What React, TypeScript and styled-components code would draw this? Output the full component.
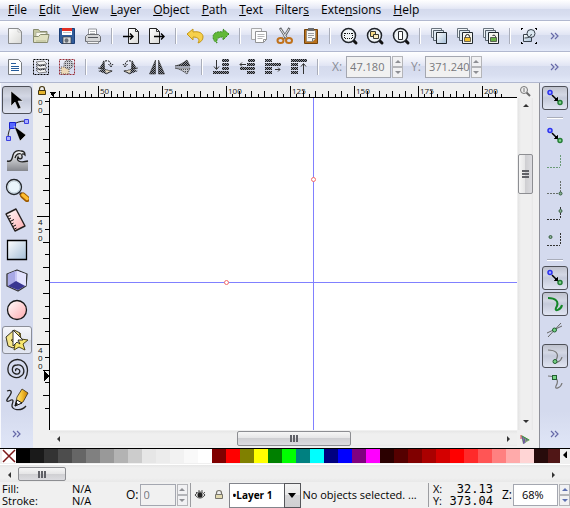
import React from "react";
import styled, { createGlobalStyle, css } from "styled-components";

const GlobalStyle = createGlobalStyle`
  *, *::before, *::after { box-sizing: border-box; }
  body {
    margin: 0;
    background: #f0f0f0;
    color: #000;
    font: 11px/16px "Open Sans", "Noto Sans", sans-serif;
  }
  button, input, select { font: inherit; color: inherit; margin: 0; border-radius: 0; }
  svg { display: block; flex: none; }
`;

/* ---------- shell ---------- */

const Shell = styled.div`
  display: flex;
  flex-direction: column;
  min-height: 100vh;
  overflow: hidden;
`;

const barSurface = css`
  background: linear-gradient(#ffffff 0%, #eef0f9 28%, #e1e5f4 45%, #d4daed 46%, #d8def0 75%, #e2e8f8 100%);
  border-bottom: 1px solid #b1b8cf;
`;

const MenuBar = styled.nav`
  ${barSurface}
  display: flex;
  height: 21px;
  padding-left: 2px;
`;

const MenuItem = styled.button`
  border: 0;
  padding: 0 6px;
  background: none;
  font-size: 12px;
  line-height: 20px;
  white-space: nowrap;
  &:hover { background: #c9d3ee; }
`;

const ToolRow = styled.div`
  ${barSurface}
  display: flex;
  align-items: center;
  height: 31px;
  padding-left: 2px;
`;

const IconButton = styled.button`
  display: grid;
  place-items: center;
  flex: none;
  width: 26px;
  height: 26px;
  padding: 0;
  border: 0;
  background: none;
`;

const Divider = styled.span`
  flex: none;
  width: 2px;
  height: 16px;
  margin: 0 5px;
  background: linear-gradient(90deg, #a9adba 50%, #ffffff 50%);
`;

const More = styled.button<{ $column?: boolean }>`
  display: grid;
  place-items: center;
  width: 26px;
  height: 20px;
  padding: 0;
  border: 0;
  background: none;
  margin: ${(p) => (p.$column ? "auto 0 4px" : "0 2px 0 auto")};
`;

/* ---------- fields ---------- */

const FieldLabel = styled.label<{ $muted?: boolean }>`
  padding-left: ${(p) => (p.$muted ? "8px" : "0")};
  color: ${(p) => (p.$muted ? "#8a8d97" : "#000")};
  font-size: 12px;
  white-space: nowrap;
`;

const Spin = styled.span<{ $gap?: number }>`
  display: flex;
  align-items: stretch;
  height: 22px;
  gap: 1px;
  margin-left: ${(p) => p.$gap ?? 4}px;
`;

const SpinInput = styled.input<{ $width: number; $active?: boolean }>`
  width: ${(p) => p.$width}px;
  padding: 0 0 0 ${(p) => (p.$active ? 8 : 3)}px;
  border: 1px solid #a4a7b0;
  background: ${(p) => (p.$active ? "#fff" : "#f1f1f1")};
  color: ${(p) => (p.$active ? "#000" : "#77787c")};
`;

const SpinButtons = styled.span`
  display: grid;
  grid-template-rows: 1fr 1fr;
  width: 11px;
`;

const StepButton = styled.button`
  display: grid;
  place-items: center;
  padding: 0;
  border: 1px solid #b4b5b9;
  background: #f1f1f3;
`;

/* ---------- middle ---------- */

const Main = styled.main`
  display: grid;
  grid-template-columns: 33px 1fr 31px;
  flex: 1;
`;

const SideBar = styled.aside<{ $snap?: boolean }>`
  display: flex;
  flex-direction: column;
  align-items: center;
  padding-top: 3px;
  border-left: 1px solid ${(p) => (p.$snap ? "#8f919a" : "#f8f9fd")};
  background: linear-gradient(#e9ecf7, #d4daee 10px, #d4daee 90%, #e0e6f7);
`;

const ToolButton = styled.button<{ $state?: "on" | "hover" }>`
  display: grid;
  place-items: center;
  width: 30px;
  height: 28px;
  margin-bottom: 2px;
  padding: 0;
  border: 1px solid transparent;
  border-radius: 3px;
  background: none;
  ${(p) => p.$state === "on" && css`
    border-color: #4e5058;
    background: linear-gradient(#bfc2cd, #d3d7e4 35%, #c5cada 50%, #e0e4f1);
  `}
  ${(p) => p.$state === "hover" && css`
    border-color: #8b8e98;
    background: linear-gradient(#f5f6fa, #e6e9f1 48%, #d1d6e3 50%, #e4e8f3);
  `}
`;

const SnapButton = styled(ToolButton)`
  width: 26px;
  height: 24px;
`;

const SideRule = styled.span`
  width: 16px;
  height: 2px;
  margin: 5px 0;
  background: linear-gradient(#a9adba 50%, #ffffff 50%);
`;

const Workspace = styled.section`
  display: grid;
  grid-template-columns: 17px 1fr 16px 6px;
  grid-template-rows: 15px 1fr 18px;
  min-width: 0;
  background: #f0f0f0;
`;

const Corner = styled.div<{ $area: string }>`
  display: grid;
  place-items: center;
  grid-area: ${(p) => p.$area};
`;

const Drawing = styled.svg`
  position: absolute;
  inset: 0;
  width: 100%;
  height: 100%;
  overflow: hidden;
`;

const Slot = styled.div<{ $area: string }>`
  position: relative;
  min-width: 0;
  overflow: hidden;
  grid-area: ${(p) => p.$area};
`;

const Paper = styled(Slot)`
  background: #fff;
`;

/* ---------- scrollbars ---------- */

const Track = styled.div<{ $vertical?: boolean }>`
  display: flex;
  flex-direction: ${(p) => (p.$vertical ? "column" : "row")};
  background: ${(p) => (p.$vertical
    ? "linear-gradient(90deg, #e4e4e4, #efefef 3px, #efefef 13px, #e6e6e6)"
    : "linear-gradient(#e6e6e6, #efefef 3px, #efefef 13px, #e8e8e8)")};
`;

const SideTrack = styled(Track)`
  grid-area: 2 / 3;
  margin-left: 1px;
`;

const BottomTrack = styled(Track)`
  grid-area: 3 / 2;
  margin: 1px 0 2px;
`;

const ScrollArrow = styled.button`
  display: grid;
  place-items: center;
  flex: none;
  width: 16px;
  height: 16px;
  padding: 0;
  border: 0;
  background: none;
`;

const Travel = styled.div<{ $share: number }>`
  flex: ${(p) => p.$share};
`;

const Thumb = styled.div<{ $vertical?: boolean; $share: number }>`
  display: flex;
  flex-direction: ${(p) => (p.$vertical ? "column" : "row")};
  align-items: center;
  justify-content: center;
  gap: 1px;
  flex: ${(p) => p.$share};
  border: 1px solid #8d8e92;
  border-radius: 2px;
  background: linear-gradient(${(p) => (p.$vertical ? "90deg" : "180deg")}, #f6f6f6, #e5e5e6 48%, #cfcfd2 50%, #dcdce0);
`;

const Grip = styled.i<{ $vertical?: boolean }>`
  ${(p) => (p.$vertical ? "width: 7px; height: 2px;" : "width: 2px; height: 7px;")}
  background: #606167;
`;

const MiniTrack = styled(Track)`
  height: 18px;
  padding: 2px 8px 1px 1px;
  border-top: 1px solid #fff;
`;

/* ---------- palette ---------- */

const Palette = styled.div`
  display: flex;
  height: 16px;
  padding: 0 0 1px 2px;
  border-top: 1px solid #000;
`;

const SwatchStrip = styled.div`
  display: flex;
  flex: 1;
  min-width: 0;
  overflow: hidden;
`;

const Swatch = styled.button<{ $color: string }>`
  flex: none;
  width: 14px;
  height: 14px;
  padding: 0;
  border: 0;
  background: ${(p) => p.$color};
`;

const PaletteMenu = styled.button`
  width: 10px;
  height: 10px;
  padding: 1px;
  border: 0;
  background: none;
`;

/* ---------- status ---------- */

const StatusBar = styled.footer`
  display: flex;
  align-items: center;
  height: 26px;
  padding-left: 2px;
  white-space: nowrap;
`;

const PaintGrid = styled.dl`
  display: grid;
  grid-template-columns: 70px 54px;
  grid-auto-rows: 12px;
  flex: none;
  margin: 0;
  line-height: 12px;
  dt, dd { margin: 0; }
`;

const SmallButton = styled.button`
  display: grid;
  place-items: center;
  flex: none;
  width: 19px;
  height: 22px;
  padding: 0;
  border: 0;
  background: none;
`;

const StatusRule = styled.span`
  flex: none;
  width: 1px;
  height: 24px;
  margin-left: 2px;
  background: #9c9da1;
`;

const LayerPicker = styled.span`
  display: grid;
  grid-template-columns: 1fr 17px;
  flex: none;
  width: 72px;
  height: 25px;
  > * { grid-row: 1; }
`;

const LayerSelect = styled.select`
  grid-column: 1 / -1;
  appearance: none;
  padding: 0 0 0 3px;
  border: 1px solid #83858c;
  background: #fff;
  font-size: 10px;
  font-weight: 700;
`;

const LayerArrow = styled.span`
  grid-column: 2;
  display: grid;
  place-items: center;
  border: 1px solid #55565a;
  background: linear-gradient(#f3f3f3, #e8e8e8 48%, #d5d5d7 50%, #cfcfd1);
  pointer-events: none;
`;

const Message = styled.output`
  flex: 1;
  min-width: 0;
  padding-left: 2px;
  overflow: hidden;
`;

const Coords = styled(PaintGrid)`
  grid-template-columns: 12px 48px;
  padding-left: 4px;
  dd { font: 12px/12px "DejaVu Sans Mono", monospace; text-align: right; }
`;

const ZoomLabel = styled(FieldLabel)`
  padding-left: 9px;
`;

/* ---------- icon drawings ---------- */

type IconProps = { size?: number; children: React.ReactNode };

const Icon = ({ size = 20, children }: IconProps) => (
  <svg width={size} height={size} viewBox={`0 0 ${size} ${size}`} fill="none" aria-hidden="true">{children}</svg>
);

const Defs = () => (
  <svg width="0" height="0" aria-hidden="true">
    <defs>
      <pattern id="dither" width="2" height="2" patternUnits="userSpaceOnUse">
        <path d="M0 0h1v1H0zM1 1h1v1H1z" fill="#17181c" />
        <path d="M1 0h1v1H1zM0 1h1v1H0z" fill="#8d9099" />
      </pattern>
      <pattern id="ditherLight" width="2" height="2" patternUnits="userSpaceOnUse">
        <path d="M0 0h2v2H0z" fill="#c8cad0" />
        <path d="M0 0h1v1H0z" fill="#4b4d55" />
      </pattern>
      <linearGradient id="page" x1="0" y1="0" x2="1" y2="1"><stop stopColor="#fff" /><stop offset="1" stopColor="#d9d9d6" /></linearGradient>
      <linearGradient id="sky" x1="0" y1="0" x2="1" y2="1"><stop stopColor="#fff" /><stop offset="1" stopColor="#a3bdd6" /></linearGradient>
      <linearGradient id="rose" x1="0" y1="0" x2="1" y2="1"><stop stopColor="#fff" /><stop offset="1" stopColor="#ffa9ad" /></linearGradient>
      <linearGradient id="gold" x1="0" y1="0" x2="1" y2="0"><stop stopColor="#fff3a0" /><stop offset=".5" stopColor="#f6c437" /><stop offset="1" stopColor="#c77e00" /></linearGradient>
      <linearGradient id="steel" x1="0" y1="0" x2="0" y2="1"><stop stopColor="#f7f8fa" /><stop offset="1" stopColor="#85878d" /></linearGradient>
    </defs>
  </svg>
);

const sheet = "M3.5 2.5h10l3 3v12h-13z";

const Glass = ({ children }: { children?: React.ReactNode }) => (
  <Icon>
    <path d="M14 14l3 3" stroke="#111" strokeWidth="3" strokeLinecap="round" />
    <circle cx="9.5" cy="9.5" r="7" fill="#eef3f6" stroke="#20242a" strokeWidth="1.5" />
    {children}
  </Icon>
);

const Layers = ({ lock }: { lock?: "gold" | "green" }) => (
  <Icon>
    <path d="M2.5 2.5h10v9h-10z" fill="#eef3f7" stroke="#6a747e" />
    <path d="M4.5 4.5h10v10h-10z" fill="#dfe9f1" stroke="#55606b" />
    <path d="M7.5 6.5h10v11h-10z" fill={lock ? "#f5f5ef" : "url(#sky)"} stroke="#1f262c" />
    {lock && (
      <>
        <path d={lock === "gold" ? "M10.5 12v-1.5a2 2 0 0 1 4 0V12" : "M11.500 9.500a2 2 0 0 1 3 1v1"} stroke="#222" />
        <path d="M9.5 11.5h6v4h-6z" fill={lock === "gold" ? "#f3c02c" : "#67b045"} stroke="#333" strokeWidth=".7" />
      </>
    )}
  </Icon>
);

const fileIcons: Record<string, React.ReactNode> = {
  New: <Icon><path d={sheet} fill="url(#page)" stroke="#8a8c8e" /><path d="M13 3l3 3h-3z" fill="#fff" stroke="#b0b0b0" strokeWidth=".6" /></Icon>,
  Open: (
    <Icon>
      <path d="M2.5 15.5v-12h5l1.5 2h7v3" fill="#c5c8a3" stroke="#878b6e" />
      <path d="M5 6.5h10v5H5z" fill="#f8f8ef" stroke="#a9ab93" strokeWidth=".7" />
      <path d="M2.5 10.5h5l2-2h8.5l-1.5 8h-14z" fill="#dfe0c0" stroke="#878b6e" />
      <path d="M5 15h10" stroke="#b8bb95" />
    </Icon>
  ),
  Save: (
    <Icon>
      <path d="M2.5 2.5h15v15h-13l-2-2z" fill="#315c9c" stroke="#1c3e76" />
      <path d="M5 3h10v6H5z" fill="#fff" /><path d="M5 2h10v3H5z" fill="#e22f24" /><path d="M6 6.5h8" stroke="#b9c4cf" />
      <path d="M6 11h8v6.5H6z" fill="#dadbdd" stroke="#36393e" strokeWidth=".7" /><ellipse cx="9.5" cy="14.5" rx="2" ry="2.2" fill="#6b7178" />
    </Icon>
  ),
  Print: (
    <Icon>
      <path d="M5.5 10v-7h8v7" fill="#fff" stroke="#92949a" /><path d="M7 5.5h5M7 7.5h5" stroke="#b8babd" />
      <path d="M2.5 10.5l2-2h11l2 2v5h-15z" fill="#d4d5d7" stroke="#6b6d72" />
      <path d="M5 11.5h10" stroke="#4f5258" /><path d="M4.5 15.5h11v2h-11z" fill="#f2f2f2" stroke="#898b8f" />
    </Icon>
  ),
  Import: (
    <Icon>
      <path d="M7.5 2.5h7l3 3v12h-10z" fill="url(#page)" stroke="#222" /><path d="M14.5 2.5v3h3" stroke="#333" />
      <path d="M2 10.5h10M9 7.5l3 3-3 3" stroke="#000" strokeWidth="1.4" />
    </Icon>
  ),
  Export: (
    <Icon>
      <path d="M2.5 2.5h7l3 3v12h-10z" fill="url(#page)" stroke="#222" /><path d="M9.5 2.5v3h3" stroke="#333" />
      <path d="M7 10.5h10M14 7.5l3 3-3 3" stroke="#000" strokeWidth="1.4" />
    </Icon>
  ),
  Undo: <Icon><path d="M2 8l6-5v3c6-1 10 1 10 5 0 3-2 5-5 6 2-3 1-6-5-6v3z" fill="#f6d04b" stroke="#c49716" strokeLinejoin="round" /></Icon>,
  Redo: <Icon><path d="M18 8l-6-5v3C6 5 2 7 2 11c0 3 2 5 4 6-1-4 1-6 6-6v3z" fill="#61b837" stroke="#3d8926" strokeDasharray="2 1" strokeLinejoin="round" /></Icon>,
  Copy: (
    <Icon>
      <path d="M2.5 2.5h10v11h-10z" fill="#f7f7f7" stroke="#a7a8aa" />
      <path d="M6.5 5.5h11v8l-3 3h-8z" fill="#fff" stroke="#929395" /><path d="M8.5 8.5h7M8.5 10.5h7M8.5 12.5h5" stroke="#b5b6b8" /><path d="M14.5 16.5v-3h3" stroke="#929395" />
    </Icon>
  ),
  Cut: (
    <Icon>
      <path d="M5 2l7 11M14.5 2L8 13" stroke="#66696d" strokeWidth="2.5" /><path d="M5.5 3l6 9M14 3l-6 9" stroke="#e4e6e8" />
      <ellipse cx="5.5" cy="14.5" rx="3" ry="2.5" stroke="#c0711a" strokeWidth="2" /><ellipse cx="14" cy="14.5" rx="3" ry="2.5" stroke="#c0711a" strokeWidth="2" />
    </Icon>
  ),
  Paste: (
    <Icon>
      <path d="M3.5 3.5h13v14h-13z" fill="#b9711c" stroke="#744309" /><path d="M5.5 4.5h9v8l-3 3h-6z" fill="#f8f8f6" stroke="#77766f" strokeWidth=".6" />
      <path d="M7 7.5h6M7 9.5h6M7 11.5h4" stroke="#9da0a2" /><path d="M7 2h6v3H7z" fill="#6a6c70" /><path d="M11.5 15.5v-3h3" fill="#ddd" stroke="#77766f" />
    </Icon>
  ),
  "Zoom selection": <Glass><path d="M6 7.5h8M6 12.500h8M5.5 7v6M13.5 7v6" stroke="#111" strokeDasharray="1 1" /></Glass>,
  "Zoom drawing": <Glass><path d="M5.5 5.5h5v5h-5z" fill="#f5d986" stroke="#3a3a2e" /><path d="M8.5 8.5h5v4h-5z" fill="#fbeec4" stroke="#3a3a2e" /></Glass>,
  "Zoom page": <Glass><path d="M7.5 5.500h4v8h-4z" fill="#fff" stroke="#2a2d31" /></Glass>,
  Duplicate: <Layers />,
  Clone: <Layers lock="gold" />,
  "Unlink clone": <Layers lock="green" />,
  Group: (
    <Icon>
      <path d="M4.5 8.5h8v7h-8z" fill="url(#sky)" stroke="#38404a" /><circle cx="12" cy="7.5" r="4" fill="#dbe7f1" stroke="#38404a" /><path d="M5.5 12c4 0 6-1 7-4" stroke="#38404a" />
      <path d="M2 2h2v1H3v1H2zM16 2h2v2h-1V3h-1zM2 16h1v1h1v1H2zM17 16h1v2h-2v-1h1z" fill="#000" />
    </Icon>
  ),
};

const Prism = ({ flip }: { flip?: boolean }) => (
  <Icon>
    <g transform={flip ? "translate(20 0) scale(-1 1)" : undefined}>
      <path d="M9 3l1 10-6-1zM9 12l9 2-7 3-8-3z" fill="url(#dither)" /><path d="M9 4v8l-6-1M10 13l7 1-6 3" stroke="#333" strokeWidth=".8" />
      <path d="M10 13l6 1-5 2z" fill="#e9dfc8" />
      <path d="M10 4c4-1 6 1 6 5M13.5 7l2.5 3 2-3" stroke="#16171a" strokeDasharray="2 1" />
    </g>
  </Icon>
);

const Stack = ({ d, bars }: { d: string; bars: number[][] }) => (
  <Icon>
    {bars.map(([x, y, w]) => <rect key={y} x={x} y={y} width={w} height="3" fill="url(#dither)" />)}
    <path d={d} stroke="#333" />
  </Icon>
);

const selectIcons: Record<string, React.ReactNode> = {
  "Select all": (
    <Icon><path d={sheet} fill="#fdfdfd" stroke="#777b80" /><path d="M6 6.5h5M6 9.5h8M6 11.5h8M6 13.5h8" stroke="#245b9b" /></Icon>
  ),
  "Select in all layers": (
    <Icon>
      <path d="M2.5 2.5h15v15h-15z" stroke="#000" strokeDasharray="2 1" />
      <path d="M5 5l8-1 3 3-8 1zM5 9l8-1 3 3-8 1zM5 13l8-1 3 3-8 1z" fill="#f5f5f5" stroke="#555" strokeWidth=".7" /><path d="M5 7l4 2 6-1M5 11l4 2 6-1" stroke="url(#dither)" />
    </Icon>
  ),
  Deselect: (
    <Icon>
      <path d="M2.5 2.5h15v15h-15z" stroke="#982b35" strokeDasharray="2 1" />
      <path d="M4 10h8v7H4z" fill="#edd9b7" stroke="#665d50" strokeDasharray="1 1" /><circle cx="11.5" cy="7.5" r="4.5" fill="url(#ditherLight)" stroke="#555" strokeDasharray="1 1" />
    </Icon>
  ),
  "Rotate left": <Prism />,
  "Rotate right": <Prism flip />,
  "Flip horizontal": <Icon><path d="M8.5 3v14h-6zM11.5 3v14h6z" fill="url(#dither)" stroke="#333" strokeWidth=".6" /></Icon>,
  "Flip vertical": <Icon><path d="M2 9c5-1 8-3 12-6l3 6z" fill="url(#dither)" stroke="#333" strokeWidth=".6" /><path d="M2 11c5 1 8 3 12 6l3-6z" fill="url(#ditherLight)" stroke="#333" strokeWidth=".6" /></Icon>,
  "Lower to bottom": <Stack d="M5.5 3v9M3 9.5l2.5 3 2.5-3" bars={[[11, 2, 7], [11, 6, 7], [11, 10, 7], [2, 14, 16]]} />,
  Lower: <Stack d="M9 7.500H3M5 5.500l-2 2 2 2" bars={[[11, 2, 7], [10, 6, 8], [3, 10, 15], [10, 14, 8]]} />,
  Raise: <Stack d="M12 12.5h5M15 10.500l2 2-2 2" bars={[[2, 2, 7], [2, 6, 16], [2, 10, 7], [2, 14, 7]]} />,
  "Raise to top": <Stack d="M14.5 17V7M12 9.5l2.5-3 2.5 3" bars={[[2, 2, 16], [2, 6, 7], [2, 10, 7], [2, 14, 7]]} />,
};

const toolIcons: [string, React.ReactNode, ("on" | "hover")?][] = [
  ["Selector", <Icon size={24}><path d="M6 3v15l4-4 3 7 3-1-3-7h5z" fill="#000" stroke="#fff" strokeWidth=".5" /></Icon>, "on"],
  ["Edit paths", (
    <Icon size={24}>
      <path d="M3 20C3 9 9 3 21 3" stroke="#222" /><path d="M1.5 18.5h4v4h-4zM19.5 1.5h4v4h-4z" fill="#a9adff" stroke="#3a3fe0" />
      <path d="M4.5 4.5h6v6h-6z" fill="#5767ff" stroke="#1720cf" /><path d="M9 8l12 9-6 6z" fill="#000" stroke="#fff" strokeWidth=".5" />
    </Icon>
  )],
  ["Tweak", (
    <Icon size={24}>
      <path d="M2 23V13c4 1 5-1 6-6 1-4 5-5 8-4 3 0 4 2 4 4-2-2-4-1-3 1 1 3-3 4-4 1-2 4 2 6 10 4v10z" fill="url(#steel)" />
      <path d="M2 13c4 1 5-1 6-6 1-4 5-5 8-4 3 0 4 2 4 4-2-2-4-1-3 1 1 3-3 4-4 1-2 4 2 6 10 4M10 10c1-4 4-5 6-4" stroke="#222" strokeWidth="1.3" />
    </Icon>
  )],
  ["Zoom", (
    <Icon size={24}>
      <path d="M15 15l3 3" stroke="#333" strokeWidth="3" /><path d="M18 17.5l4 3.5" stroke="#9e5b00" strokeWidth="6" strokeLinecap="round" /><path d="M18 17l4 3.5" stroke="#ffbd30" strokeWidth="3.5" strokeLinecap="round" />
      <circle cx="9" cy="9" r="7.5" fill="url(#sky)" stroke="#24272b" strokeWidth="1.3" /><circle cx="9" cy="9" r="6" fill="#eaf5fc" stroke="#c3d0d8" />
    </Icon>
  )],
  ["Measure", <Icon size={24}><path d="M1 6l10-5 9 17-10 5z" fill="url(#rose)" stroke="#25201f" strokeWidth="1.4" strokeLinejoin="round" /><path d="M2.5 8.5l3-1M4 11l2-1M5 13.5l4-2M6.5 16l2-1M8 18.5l3-1.5M9.5 21l2-1" stroke="#111" /></Icon>],
  ["Rectangle", <Icon size={24}><path d="M2.5 2.5h19v19h-19z" fill="url(#sky)" stroke="#000" strokeWidth="1.3" /></Icon>],
  ["3D box", (
    <Icon size={24}>
      <path d="M2 6l10-4 10 4-1 12-8 5-11-5z" fill="#c8c6f5" stroke="#333" strokeWidth="1.3" strokeLinejoin="round" />
      <path d="M10 3v11l-7 4V6z" fill="#a9a9e6" /><path d="M12 3l9 3v12l-9-4z" fill="#e3e3fd" /><path d="M3 18l8-5 9 5-7 4z" fill="#3a3791" />
    </Icon>
  )],
  ["Ellipse", <Icon size={24}><circle cx="12" cy="12" r="9.5" fill="url(#rose)" stroke="#161616" strokeWidth="1.3" /></Icon>],
  ["Star", (
    <Icon size={24}>
      <path d="M1 9l8-7 6 3 1 10-8 5-5-2z" fill="#f5e68a" stroke="#3a3522" /><path d="M15 5l1 6 7 1-5 4 2 6-6-3-5 3 1-6-4-4 6-1z" fill="#f7e66d" stroke="#504716" />
      <path d="M8 2v16l4-4 3 2-2-4h5z" fill="#fff" stroke="#222" strokeWidth=".9" />
    </Icon>
  ), "hover"],
  ["Spiral", <Icon size={24}><path d="M11 13c-1-1 0-3 2-2 3 1 2 6-2 5-5-1-5-9 1-9 7-1 9 8 4 11-5 4-14 0-13-8C4 2 13-1 19 4c5 5 4 12 1 17" stroke="#222" strokeWidth="1.3" /></Icon>],
  ["Pencil", (
    <Icon size={24}>
      <path d="M2 3c6-2 5 2 1 7-3 4 0 4 3 2 3-1 2 2 1 5-1 5 9 7 14 1" stroke="#222" strokeWidth="1.3" />
      <path d="M10 18l2-9 5-8 6 4-5 9z" fill="url(#gold)" stroke="#332b18" strokeWidth=".8" /><path d="M10 18l2-6 5 3z" fill="#fff" stroke="#111" /><path d="M10 18l1-4 2 2z" fill="#111" />
    </Icon>
  )],
];

const Nodes = () => (
  <Icon>
    <path d="M7 7l6 6" stroke="#000" strokeWidth="1.5" /><path d="M12.5 9.500v3h-3z" fill="#000" stroke="#000" />
    <circle cx="5" cy="4.5" r="2" fill="#a8abff" stroke="#2b32f0" strokeWidth="1.5" /><circle cx="15" cy="14.5" r="2" fill="#85d88e" stroke="#257d37" strokeWidth="1.5" />
  </Icon>
);

const SnapCorner = ({ color = "#333", mark }: { color?: string; mark?: number[] }) => (
  <Icon>
    <path d="M2 15.5h13M15.5 3v12" stroke={color} strokeDasharray="2 1" />
    {mark && <circle cx={mark[0]} cy={mark[1]} r="1.5" fill="#8bb295" stroke="#355d3f" />}
  </Icon>
);

type CurveProps = { color?: string; mark?: number[]; square?: boolean };

const SnapCurve = ({ color = "#777", mark, square }: CurveProps) => (
  <Icon>
    <path d="M3 4c7 0 12 3 8 10-2 4 5 2 6-3" stroke={color} strokeWidth={mark ? 1.2 : 2} />
    {mark && (square
      ? <rect x={mark[0] - 2} y={mark[1] - 2} width="4" height="4" fill="#77d284" stroke="#215e31" />
      : <circle cx={mark[0]} cy={mark[1]} r="2" fill="#77d284" stroke="#215e31" />)}
  </Icon>
);

const snapItems: ([string, React.ReactNode, "on"?] | null)[] = [
  ["Enable snapping", <Nodes />, "on"],
  null,
  ["Snap bounding box", <Nodes />],
  ["Snap box edges", <SnapCorner color="#6b9b77" />],
  ["Snap box corners", <SnapCorner color="#69706c" mark={[15.5, 15.5]} />],
  ["Snap edge midpoints", <SnapCorner mark={[15.5, 7]} />],
  ["Snap box centers", <SnapCorner mark={[5.5, 7]} />],
  null,
  ["Snap nodes", <Nodes />, "on"],
  ["Snap to paths", <SnapCurve color="#158629" />, "on"],
  ["Snap to intersections", <Icon><path d="M2 13L17 6M3 17L16 3" stroke="#666" /><circle cx="9.5" cy="10" r="2" fill="#77d284" stroke="#215e31" /></Icon>],
  ["Snap to cusp nodes", <SnapCurve mark={[10, 15.5]} />, "on"],
  ["Snap to smooth nodes", <SnapCurve mark={[9.5, 5.5]} square />],
];

const Chevrons = () => <Icon size={10}><path d="M1 2l3 3-3 3M5 2l3 3-3 3" stroke="#6669a8" strokeWidth="1.2" /></Icon>;

const paths = { left: "M6 1v6L3 4z", right: "M2 1v6l3-3z", up: "M1 5h6L4 2z", down: "M1 2h6L4 5z" };
const Arrow = ({ to, color = "#333" }: { to: keyof typeof paths; color?: string }) => (
  <Icon size={8}><path d={paths[to]} fill={color} /></Icon>
);

const Lock = ({ color, line = "#44360f" }: { color: string; line?: string }) => (
  <Icon size={12}><path d="M3.5 5.500V4a2.5 2.5 0 0 1 5 0v2" stroke={line} strokeWidth="1.2" /><path d="M2.5 5.5h7v4h-7z" fill={color} stroke={line} /></Icon>
);

/* ---------- composed parts ---------- */

const menus: [string, number][] = [
  ["File", 0], ["Edit", 0], ["View", 0], ["Layer", 0], ["Object", 0],
  ["Path", 0], ["Text", 0], ["Filters", 6], ["Extensions", 4], ["Help", 0],
];

const fileGroups = [
  ["New", "Open", "Save", "Print"], ["Import", "Export"], ["Undo", "Redo"], ["Copy", "Cut", "Paste"],
  ["Zoom selection", "Zoom drawing", "Zoom page"], ["Duplicate", "Clone", "Unlink clone"], ["Group"],
];

const selectGroups = [
  ["Select all", "Select in all layers", "Deselect"],
  ["Rotate left", "Rotate right", "Flip horizontal", "Flip vertical"],
  ["Lower to bottom", "Lower", "Raise", "Raise to top"],
];

const Groups = ({ groups, icons }: { groups: string[][]; icons: Record<string, React.ReactNode> }) => (
  <>
    {groups.map((group, i) => (
      <React.Fragment key={group[0]}>
        {i > 0 && <Divider />}
        {group.map((name) => <IconButton key={name} aria-label={name}>{icons[name]}</IconButton>)}
      </React.Fragment>
    ))}
  </>
);

type SpinProps = { id: string; value: string; width: number; gap?: number; active?: boolean };

const SpinField = ({ id, value, width, gap, active }: SpinProps) => (
  <Spin $gap={gap}>
    <SpinInput id={id} defaultValue={value} $width={width} $active={active} />
    <SpinButtons>
      <StepButton aria-label="Increase"><Arrow to="up" color={active ? "#5c6fb0" : "#8e8f94"} /></StepButton>
      <StepButton aria-label="Decrease"><Arrow to="down" color={active ? "#5c6fb0" : "#8e8f94"} /></StepButton>
    </SpinButtons>
  </Spin>
);

type ScrollProps = { vertical?: boolean; before: number; thumb: number; after: number };

const ScrollParts = ({ vertical, before, thumb, after }: ScrollProps) => (
  <>
    <ScrollArrow aria-label="Scroll back"><Arrow to={vertical ? "up" : "left"} /></ScrollArrow>
    <Travel $share={before} />
    <Thumb $vertical={vertical} $share={thumb}>
      <Grip $vertical={vertical} /><Grip $vertical={vertical} /><Grip $vertical={vertical} />
    </Thumb>
    <Travel $share={after} />
    <ScrollArrow aria-label="Scroll forward"><Arrow to={vertical ? "down" : "right"} /></ScrollArrow>
  </>
);

const tickStep = 6.4;

function useSize() {
  const ref = React.useRef<SVGSVGElement>(null);
  const [size, setSize] = React.useState({ width: 0, height: 0 });
  React.useLayoutEffect(() => {
    const node = ref.current;
    if (!node) return;
    const read = () => {
      const box = node.getBoundingClientRect();
      setSize({ width: box.width, height: box.height });
    };
    read();
    const watcher = new ResizeObserver(read);
    watcher.observe(node);
    return () => watcher.disconnect();
  }, []);
  return { ref, ...size };
}

const TopRuler = () => {
  const { ref, width } = useSize();
  return (
    <Drawing ref={ref} shapeRendering="crispEdges">
      <rect y="14" width="100%" height="1" fill="#000" />
      {Array.from({ length: Math.max(0, Math.floor((width - 9) / tickStep)) }, (_, n) => {
        const units = 32.5 + n * 2.5;
        const x = Math.round(n * tickStep + 3);
        const major = units % 25 === 0;
        const height = major ? 11 : units % 5 === 0 ? 6 : 3;
        return (
          <g key={n}>
            <rect x={x} y={14 - height} width="1" height={height} fill="#000" />
            {major && x + 20 < width && <text x={x + 2} y="11" fontSize="8" fill="#111">{units}</text>}
          </g>
        );
      })}
      <path d="M0 9h6l-3 5z" fill="#000" />
    </Drawing>
  );
};

const SideRuler = () => {
  const { ref, height } = useSize();
  return (
    <Drawing ref={ref} shapeRendering="crispEdges">
      <rect x="16" width="1" height="100%" fill="#000" />
      {Array.from({ length: Math.max(0, Math.floor((height + 10) / tickStep / 2)) }, (_, n) => {
        const y = Math.round(n * tickStep * 2 - 10);
        const width = n % 10 === 0 ? 12 : n % 2 === 0 ? 6 : 4;
        const label = n % 10 === 0 && y + 30 < height ? String(500 - n * 5) : "";
        return (
          <g key={n}>
            <rect x={16 - width} y={y} width={width} height="1" fill="#000" />
            {label.split("").map((digit, i) => (i > 0 || n > 0) && (
              <text key={i} x="5" y={y + 9 + i * 8} fontSize="8" fill="#111">{digit}</text>
            ))}
          </g>
        );
      })}
      <path d="M11 273l5 5-5 5z" fill="#000" />
    </Drawing>
  );
};

const Guides = () => (
  <Drawing>
    <rect x="263" width="1" height="100%" fill="#8080ff" />
    <rect y="184" width="100%" height="1" fill="#8080ff" />
    <circle cx="263.5" cy="81.5" r="2" fill="#fff" stroke="#f26d6d" />
    <circle cx="176.5" cy="184.5" r="2" fill="#fff" stroke="#f26d6d" />
  </Drawing>
);

const swatches = (
  "000000 1a1a1a 333333 4d4d4d 666666 808080 999999 b3b3b3 cccccc e6e6e6 ececec f2f2f2 f9f9f9 ffffff " +
  "800000 ff0000 808000 ffff00 008000 00ff00 008080 00ffff 000080 0000ff 800080 ff00ff " +
  "2b0000 550000 800000 aa0000 d40000 ff0000 ff2a2a ff5555 ff8080 ffaaaa ffd5d5 280b0b 501616"
).split(" ");

export default function App() {
  return (
    <Shell>
      <GlobalStyle />
      <MenuBar aria-label="Main menu">
        {menus.map(([name, key]) => (
          <MenuItem key={name}>{name.slice(0, key)}<u>{name[key]}</u>{name.slice(key + 1)}</MenuItem>
        ))}
      </MenuBar>
      <ToolRow role="toolbar" aria-label="Commands">
        <Groups groups={fileGroups} icons={fileIcons} />
        <More aria-label="More commands"><Chevrons /></More>
      </ToolRow>
      <ToolRow role="toolbar" aria-label="Selection controls">
        <Groups groups={selectGroups} icons={selectIcons} />
        <Divider />
        <FieldLabel $muted htmlFor="x-position">X:</FieldLabel>
        <SpinField id="x-position" value="47.180" width={45} />
        <FieldLabel $muted htmlFor="y-position">Y:</FieldLabel>
        <SpinField id="y-position" value="371.240" width={45} />
        <More aria-label="More controls"><Chevrons /></More>
      </ToolRow>

      <Main>
        <SideBar aria-label="Tools">
          {toolIcons.map(([name, icon, state]) => (
            <ToolButton key={name} aria-label={name} $state={state}>{icon}</ToolButton>
          ))}
          <More $column aria-label="More tools"><Chevrons /></More>
        </SideBar>

        <Workspace>
          <Corner $area="1 / 1"><Lock color="#e5b52e" /></Corner>
          <Slot $area="1 / 2"><TopRuler /></Slot>
          <Corner $area="1 / 3">
            <Icon size={12}><path d="M7 7l4 4" stroke="#666" strokeWidth="2" /><circle cx="5" cy="5" r="3.5" fill="#eee" stroke="#777" /><path d="M5 3v4" stroke="#777" /></Icon>
          </Corner>
          <Slot $area="2 / 1"><SideRuler /></Slot>
          <Paper $area="2 / 2"><Guides /></Paper>
          <SideTrack $vertical><ScrollParts vertical before={40} thumb={39} after={221} /></SideTrack>
          <BottomTrack><ScrollParts before={171} thumb={113} after={150} /></BottomTrack>
          <Corner $area="3 / 3">
            <Icon size={12}><path d="M2 2l9 5-7 4z" fill="#86b36c" /><path d="M3 3l2 8M5 4l1 6M7 5l1 3" stroke="#6b4bab" /><path d="M3 3l7 4" stroke="#3b9a42" /><path d="M2 2v4" stroke="#cf4a4a" /></Icon>
          </Corner>
        </Workspace>

        <SideBar $snap aria-label="Snap controls">
          {snapItems.map((item, i) =>
            item ? (
              <SnapButton key={item[0]} aria-label={item[0]} $state={item[2]}>{item[1]}</SnapButton>
            ) : (
              <SideRule key={i} />
            ),
          )}
          <More $column aria-label="More snap controls"><Chevrons /></More>
        </SideBar>
      </Main>

      <Palette>
        <SwatchStrip>
          <Swatch $color="#fff" aria-label="No paint"><Icon size={14}><path d="M1 1l12 12M13 1L1 13" stroke="#7d1a1a" strokeWidth="1.5" /></Icon></Swatch>
          {swatches.map((c, i) => <Swatch key={i} $color={`#${c}`} aria-label={`#${c}`} />)}
        </SwatchStrip>
        <PaletteMenu aria-label="Palette menu"><Icon size={8}><path d="M6 1v8L2 5z" fill="#000" /></Icon></PaletteMenu>
      </Palette>
      <MiniTrack><ScrollParts before={1} thumb={46} after={482} /></MiniTrack>

      <StatusBar>
        <PaintGrid>
          <dt>Fill:</dt><dd>N/A</dd>
          <dt>Stroke:</dt><dd>N/A</dd>
        </PaintGrid>
        <FieldLabel htmlFor="opacity">O:</FieldLabel>
        <SpinField id="opacity" value="0" width={36} gap={1} />
        <StatusRule />
        <SmallButton aria-label="Toggle layer visibility">
          <Icon size={12}><path d="M1 6c3-4 7-4 10 0-3 4-7 4-10 0z" fill="#ddd" stroke="#444" /><circle cx="6" cy="6" r="2.5" fill="#222" /><path d="M2 3l1 1M5 1v2M8 1v2M11 3l-1 1" stroke="#555" /></Icon>
        </SmallButton>
        <SmallButton aria-label="Lock layer"><Lock color="#e2dab0" line="#77756c" /></SmallButton>
        <LayerPicker>
          <LayerSelect aria-label="Current layer"><option>•Layer 1</option></LayerSelect>
          <LayerArrow><Icon size={10}><path d="M1 3h8L5 8z" fill="#000" /></Icon></LayerArrow>
        </LayerPicker>
        <Message>No objects selected. ...</Message>
        <StatusRule />
        <Coords>
          <dt>X:</dt><dd>32.13</dd>
          <dt>Y:</dt><dd>373.04</dd>
        </Coords>
        <ZoomLabel htmlFor="zoom">Z:</ZoomLabel>
        <SpinField id="zoom" value="68%" width={45} gap={1} active />
      </StatusBar>
      <Defs />
    </Shell>
  );
}
